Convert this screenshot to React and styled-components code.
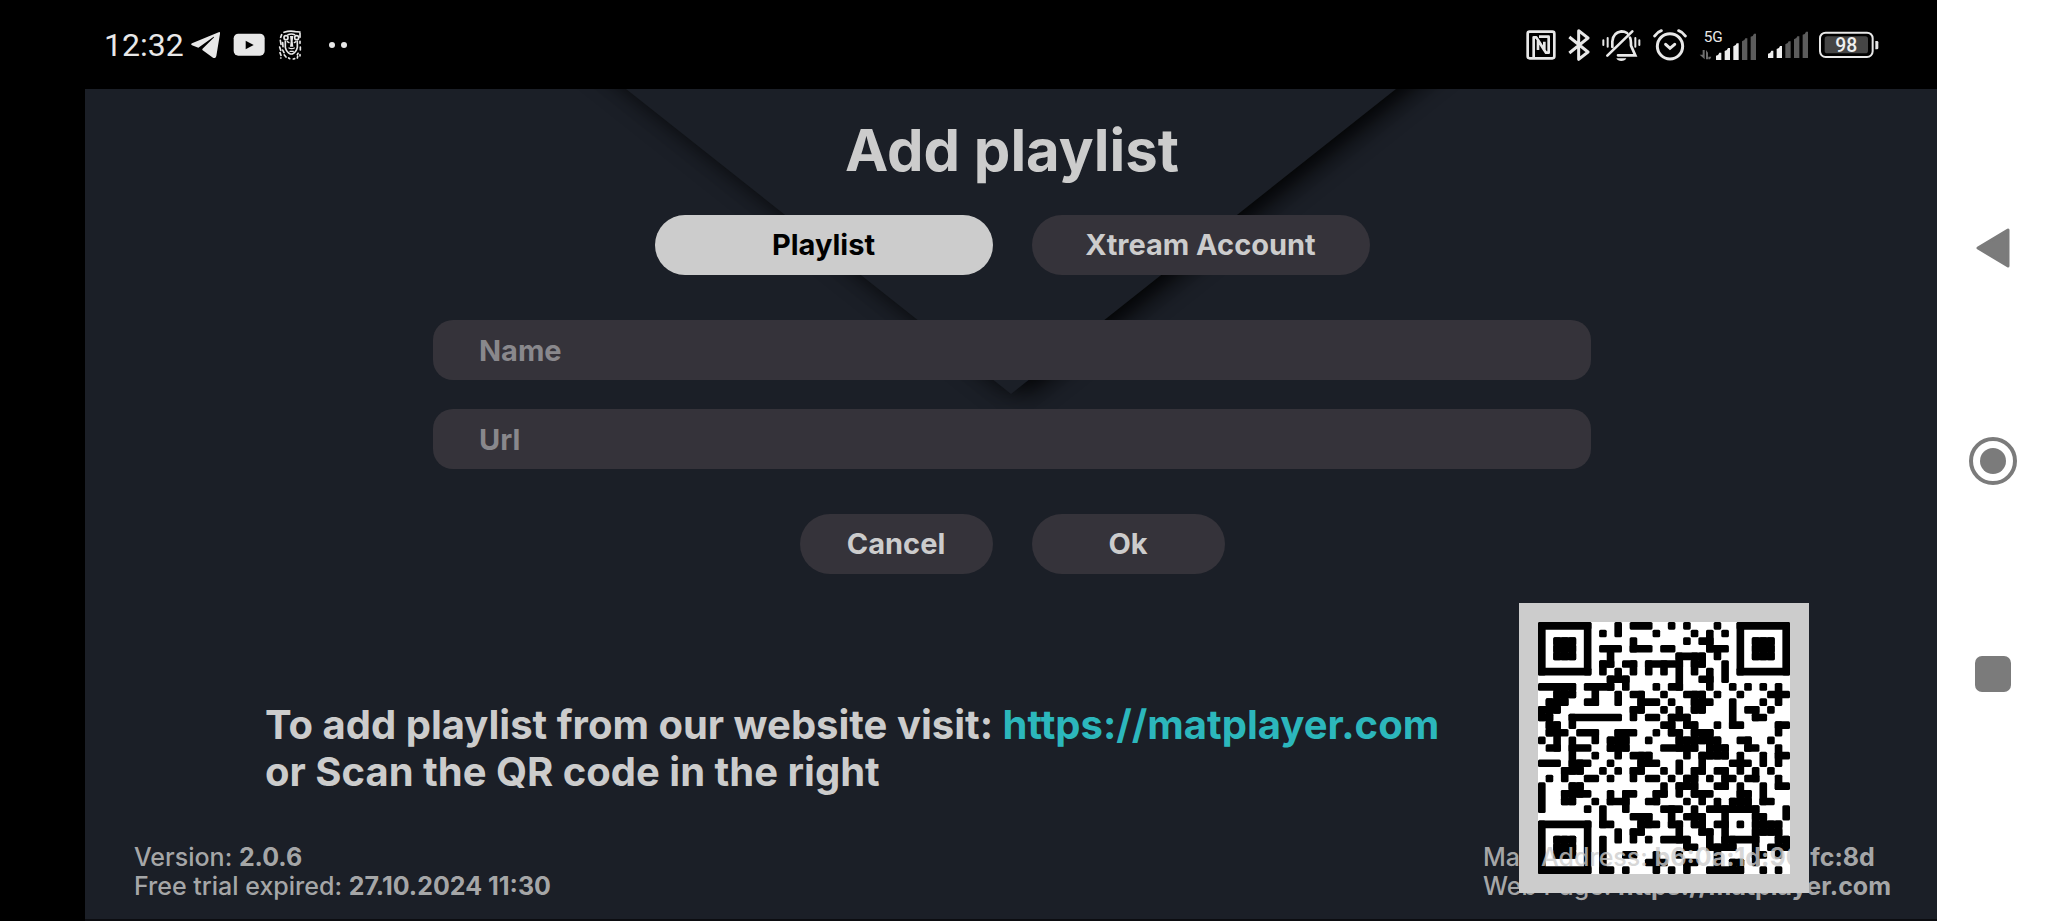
import React from "react";
import styled, { createGlobalStyle } from "styled-components";

const Global = createGlobalStyle`
  *, *::before, *::after { box-sizing: border-box; }
  body {
    margin: 0;
    background: #000;
    font-family: Inter, "Liberation Sans", sans-serif;
  }
`;

const Device = styled.div`
  display: grid;
  grid-template-columns: minmax(0, 1fr) 111px;
  min-height: 100vh;
`;

const Screen = styled.div`
  display: flex;
  flex-direction: column;
  background: #000;
`;

const StatusBar = styled.header`
  display: flex;
  justify-content: space-between;
  align-items: center;
  height: 89px;
  padding: 0 58px 0 104px;
  color: #e8e8e8;
  font-family: Roboto, sans-serif;
`;

const StatusGroup = styled.div`
  display: flex;
  align-items: center;
  gap: ${(p) => p.$gap}px;
`;

const Clock = styled.time`
  font-size: 32px;
  line-height: 40px;
`;

const Glyph = styled.svg`
  display: block;
  flex: none;
`;

const Panel = styled.main`
  position: relative;
  flex: 1;
  display: flex;
  flex-direction: column;
  margin-left: 85px;
  padding: 31px 0 26px 2px;
  overflow: hidden;
  background: #1b1f27;
  border-bottom: 2px solid #0c0d11;
`;

const Backdrop = styled.svg`
  position: absolute;
  top: 0;
  left: 50%;
  transform: translateX(-50%);
`;

const Form = styled.form`
  position: relative;
  display: flex;
  flex-direction: column;
  align-items: center;
  gap: 45px;
`;

const Heading = styled.div`
  display: flex;
  flex-direction: column;
  align-items: center;
  gap: 35px;
`;

const Title = styled.h1`
  margin: 0;
  font-size: 58px;
  line-height: 60px;
  font-weight: 700;
  color: #ccc;
`;

const ButtonRow = styled.div`
  display: flex;
  gap: 39px;
`;

const Pill = styled.button`
  width: ${(p) => (p.$wide ? 338 : 193)}px;
  height: 60px;
  border: 0;
  border-radius: 30px;
  background: ${(p) => (p.$active ? "#ccc" : "#35333a")};
  color: ${(p) => (p.$active ? "#000" : "#ccc")};
  font: 700 29px/34px Inter, sans-serif;
`;

const Fields = styled.div`
  display: flex;
  flex-direction: column;
  gap: 29px;
  width: 62.6%;
`;

const Field = styled.input`
  width: 100%;
  height: 60px;
  padding: 0 46px;
  border: 0;
  border-radius: 20px;
  outline: 0;
  background: #35333a;
  color: #ccc;
  font: 700 29px/34px Inter, sans-serif;
  &::placeholder { color: #89888c; opacity: 1; }
`;

const Info = styled.section`
  position: relative;
  display: flex;
  justify-content: space-between;
  align-items: center;
  margin-top: 29px;
  padding: 0 128px 0 178px;
`;

const Hint = styled.p`
  margin: 0;
  font-size: 40px;
  line-height: 47px;
  font-weight: 650;
  color: #ccc;
`;

const SiteLink = styled.a`
  color: #2cb7bc;
  text-decoration: none;
`;

const QrFrame = styled.div`
  flex: none;
  padding: 19px;
  background: #ccc;
`;

const Footer = styled.footer`
  position: absolute;
  left: 49px;
  right: 46px;
  bottom: 18px;
  display: flex;
  justify-content: space-between;
  font-size: 25px;
  line-height: 29px;
  font-weight: 500;
  color: rgba(204, 204, 204, 0.8);
`;

const Line = styled.div`
  white-space: nowrap;
  b { font-weight: 700; }
`;

const NavBar = styled.nav`
  display: flex;
  flex-direction: column;
  justify-content: center;
  align-items: center;
  gap: 153px;
  background: #fff;
`;

const NavButton = styled.button`
  display: grid;
  place-items: center;
  width: 60px;
  height: 60px;
  padding: 0;
  border: 0;
  background: none;
`;

const Overflow = styled(Glyph)`
  margin-left: 14px;
`;

const QR_ROWS = [
  "#######...#.###..#.#...#..#######",
  "#.....#.#.#....#....#.#.#.#.....#",
  "#.###.#.....#......#.##...#.###.#",
  "#.###.#.###.###.##....###.#.###.#",
  "#.###.#..#........####.#..#.###.#",
  "#.....#.##.##.#####.##..#.#.....#",
  "#######.#.#.#.#.#.#.#.#.#.#######",
  ".........###......#..##.#........",
  "#####.####.#...#.##...#..#.#.#.#.",
  "..###..#..#.##..#..###.#..#...###",
  ".###..##..#..###.#..###..#...#.#.",
  "###.........##..#.#.##...#.##.#..",
  "##..#######.#.##.###.....#..##...",
  ".##.#...........##.##..#.##....##",
  ".###.###..###..#.##.###........#.",
  "#.#.#..#.###..#...######..##..#..",
  ".##.###..###....#####.###..##..#.",
  "....#..#..#.###....#.####.#..#.##",
  "###.###..#...###..#..#...###.#.#.",
  "...###..#.#.##..#.#.##.##.#.#.#..",
  ".#.#..##.#..#.##.#.##.#.##.##..#.",
  "#...##..........#.###..##.#..#.##",
  "#..####..#.##..##.#.###...##.#...",
  "#..##..#.###..##...#.#.#.###.##..",
  "#.....#.#..#....###.#.#######...#",
  "........#...###..#.###..#...##..#",
  "#######.##...###.##.##.##.#.####.",
  "#.....#...#.##....#..##.#...####.",
  "#.###.#.#.#.#.#.####..#.#####..##",
  "#.###.#.#..........##.####..#.###",
  "#.###.#.#..##..#..#....#....##.#.",
  "#.....#.#.....###..##..#.##.#....",
  "#######.##.#...#.#.#..#####..#.#.",
];

const isDark = (x, y) => QR_ROWS[y]?.[x] === "#";

// Runs of dark modules, both ways, so that only the outer corners of a blob are rounded.
const qrRuns = () => {
  const n = QR_ROWS.length;
  const out = [];
  for (let y = 0; y < n; y++) {
    for (let x = 0; x < n; x++) {
      if (!isDark(x, y)) continue;
      let w = 0;
      let h = 0;
      if (!isDark(x - 1, y)) while (isDark(x + w, y)) w++;
      if (!isDark(x, y - 1)) while (isDark(x, y + h)) h++;
      if (w > 1) out.push([x, y, w, 1]);
      if (h > 1) out.push([x, y, 1, h]);
      if (w === 1 && h === 1) out.push([x, y, 1, 1]);
    }
  }
  return out;
};

const QrCode = () => (
  <Glyph width="252" height="252" viewBox="0 0 33 33" role="img" aria-label="QR code">
    <rect width="33" height="33" fill="#fff" />
    {qrRuns().map(([x, y, w, h], i) => (
      <rect key={i} x={x} y={y} width={w} height={h} rx="0.2" />
    ))}
  </Glyph>
);

const Telegram = () => (
  <Glyph width="29" height="26" viewBox="334 97 87 78" fill="#e8e8e8">
    <path d="M417 98 337 131q-5 3 0 6l19 7 45-32q4-2 1 2l-34 34v3l32 23q8 4 10-5l11-67q1-7-4-4Z" />
  </Glyph>
);

const Video = () => (
  <Glyph width="32" height="24" viewBox="457 97 96 72">
    <rect x="459" y="99" width="93" height="66" rx="14" fill="#e8e8e8" />
    <path d="M495 120v26l24-13Z" fill="#000" />
  </Glyph>
);

const Lion = () => (
  <Glyph width="24" height="30" viewBox="598 90 72 90" fill="none" stroke="#e8e8e8" strokeWidth="5" strokeLinecap="round">
    <path d="M616 97q18-6 34-2l14 1M609 104l-3 8M664 100v12M605 121l2 12M603 141l3 10M604 158l3 8M606 174h1M617 165l5 6M630 174l3 2M644 177l4-1M656 174l1-5M664 168v-4M665 150v-9M664 130v-6M612 128l1 12M612 150l4 8M658 160l-2 4" />
    <circle cx="622" cy="113" r="6" />
    <circle cx="654" cy="113" r="6" />
    <path d="M628 104q10-4 20 0M620 124v18q3 14 15 20h6q12-6 15-20v-18" />
    <path d="M634 108h10l-2 16 2 16h-10l2-16Z" fill="#e8e8e8" stroke="none" />
    <path d="M626 125l5 3M652 125l-5 3M631 144q8 4 16 0M634 154h10" strokeWidth="4" />
  </Glyph>
);

const Dots = () => (
  <Overflow width="18" height="6" viewBox="0 0 18 6" fill="#e8e8e8">
    <circle cx="3" cy="3" r="3" />
    <circle cx="15" cy="3" r="3" />
  </Overflow>
);

const Nfc = () => (
  <Glyph width="30" height="30" viewBox="78 88 90 90" fill="none" stroke="#e8e8e8" strokeWidth="8" strokeLinejoin="round">
    <rect x="83" y="93" width="80" height="80" rx="6" />
    <path d="M101 170V110h8l24 39v-26M117 108h29v48h-8l-24-38v30" />
  </Glyph>
);

const Bluetooth = () => (
  <Glyph width="22" height="34" viewBox="208 82 66 102" fill="none" stroke="#e8e8e8" strokeWidth="9">
    <path d="M212 109 268 154 240 176V90L268 112 212 157" strokeLinejoin="round" />
  </Glyph>
);

const BellOff = () => (
  <Glyph width="39" height="34" viewBox="311 83 117 102" fill="none" stroke="#e8e8e8" strokeWidth="8" strokeLinecap="round">
    <path d="M315 120v14M328 113v26M411 113v26M423 120v14" strokeWidth="6" />
    <path d="M342 140v-16q2-28 27-31 10 0 17 5M395 112q3 5 3 24l13 29h-52M327 166l75-73" />
    <path d="M354 174h30q-4 8-15 8t-15-8Z" fill="#e8e8e8" stroke="none" />
  </Glyph>
);

const Alarm = () => (
  <Glyph width="34" height="32" viewBox="463 85 102 96" fill="none" stroke="#e8e8e8" strokeWidth="9" strokeLinecap="round">
    <circle cx="514" cy="137" r="38" />
    <path d="M501 131l13 12 14-12M468 106q8-12 20-16M560 106q-8-12-20-16" />
  </Glyph>
);

const Bars = ({ left, lit }) =>
  [152, 138, 124, 109, 95].map((top, i) => (
    <path
      key={top}
      d={`M${left + i * 26} 174V${top + 9}q8-1 10-9h6V174Z`}
      fill={i < lit ? "#f0f0f0" : "#5c5c5c"}
    />
  ));

const Signal = () => (
  <Glyph width="42" height="28" viewBox="798 93 126 84">
    <Bars left={801} lit={2} />
  </Glyph>
);

const Signal5G = () => (
  <Glyph width="58" height="34" viewBox="597 78 174 102">
    <text x="611" y="120" fontSize="46" fontFamily="Roboto, sans-serif" fill="#e8e8e8">5G</text>
    <path d="M599 158h9v-14h6v28ZM618 144v28h6v-20ZM625 144v20h9l-4 8h-5Z" fill="#6e6e6e" />
    <Bars left={648} lit={3} />
  </Glyph>
);

const Battery = () => (
  <Glyph width="60" height="28" viewBox="956 91 180 84">
    <rect x="959" y="96" width="158" height="73" rx="17" fill="none" stroke="#e8e8e8" strokeWidth="6" />
    <rect x="973" y="107" width="130" height="51" rx="8" fill="#454545" />
    <path d="M1125 121h5q4 0 4 4v17q0 4-4 4h-5Z" fill="#e8e8e8" />
    <text x="1038" y="154" textAnchor="middle" fontSize="58" fontWeight="500" fontFamily="Roboto, sans-serif" fill="#f0f0f0">98</text>
  </Glyph>
);

const Triangle = () => (
  <Backdrop width="1000" height="380" viewBox="0 0 1000 380" aria-hidden="true">
    <defs>
      <filter id="soft" x="-20%" y="-20%" width="140%" height="140%">
        <feGaussianBlur stdDeviation="13" />
      </filter>
    </defs>
    <path d="M1 -90 500 306 999 -90Z" transform="translate(16 0)" fill="#000" opacity="0.85" filter="url(#soft)" />
    <path d="M1 -90 500 306 999 -90Z" transform="translate(-4 0)" fill="#000" opacity="0.4" filter="url(#soft)" />
    <path d="M115 0H885L500 305Z" fill="#1b1f27" />
  </Backdrop>
);

export default function App() {
  return (
    <>
      <Global />
      <Device>
        <Screen>
          <StatusBar>
            <StatusGroup $gap={13}>
              <StatusGroup $gap={7}>
                <Clock>12:32</Clock>
                <Telegram />
              </StatusGroup>
              <Video />
              <Lion />
              <Dots />
            </StatusGroup>
            <StatusGroup $gap={12}>
              <Nfc />
              <Bluetooth />
              <BellOff />
              <Alarm />
              <StatusGroup $gap={10}>
                <Signal5G />
                <Signal />
                <Battery />
              </StatusGroup>
            </StatusGroup>
          </StatusBar>
          <Panel>
            <Triangle />
            <Form onSubmit={(e) => e.preventDefault()}>
              <Heading>
                <Title>Add playlist</Title>
                <ButtonRow>
                  <Pill type="button" $wide $active>Playlist</Pill>
                  <Pill type="button" $wide>Xtream Account</Pill>
                </ButtonRow>
              </Heading>
              <Fields>
                <Field type="text" placeholder="Name" aria-label="Name" />
                <Field type="text" placeholder="Url" aria-label="Url" />
              </Fields>
              <ButtonRow>
                <Pill type="button">Cancel</Pill>
                <Pill type="submit">Ok</Pill>
              </ButtonRow>
            </Form>
            <Info>
              <Hint>
                To add playlist from our website visit:{" "}
                <SiteLink href="https://matplayer.com">https://matplayer.com</SiteLink>
                <br />
                or Scan the QR code in the right
              </Hint>
              <QrFrame><QrCode /></QrFrame>
            </Info>
            <Footer>
              <div>
                <Line>Version: <b>2.0.6</b></Line>
                <Line>Free trial expired: <b>27.10.2024 11:30</b></Line>
              </div>
              <div>
                <Line>Mac Address: <b>b6:0a:1d:96:fc:8d</b></Line>
                <Line>Web Page: <b>https://matplayer.com</b></Line>
              </div>
            </Footer>
          </Panel>
        </Screen>
        <NavBar>
          <NavButton aria-label="Back">
            <Glyph width="34" height="42" viewBox="0 0 34 42" fill="#7b7b7b" stroke="#7b7b7b" strokeWidth="3" strokeLinejoin="round">
              <path d="M2 21 32 3V39Z" />
            </Glyph>
          </NavButton>
          <NavButton aria-label="Home">
            <Glyph width="50" height="50" viewBox="0 0 50 50">
              <circle cx="25" cy="25" r="22" fill="none" stroke="#7b7b7b" strokeWidth="4" />
              <circle cx="25" cy="25" r="13" fill="#7b7b7b" />
            </Glyph>
          </NavButton>
          <NavButton aria-label="Recent apps">
            <Glyph width="36" height="36" viewBox="0 0 36 36">
              <rect width="36" height="36" rx="7" fill="#7b7b7b" />
            </Glyph>
          </NavButton>
        </NavBar>
      </Device>
    </>
  );
}
